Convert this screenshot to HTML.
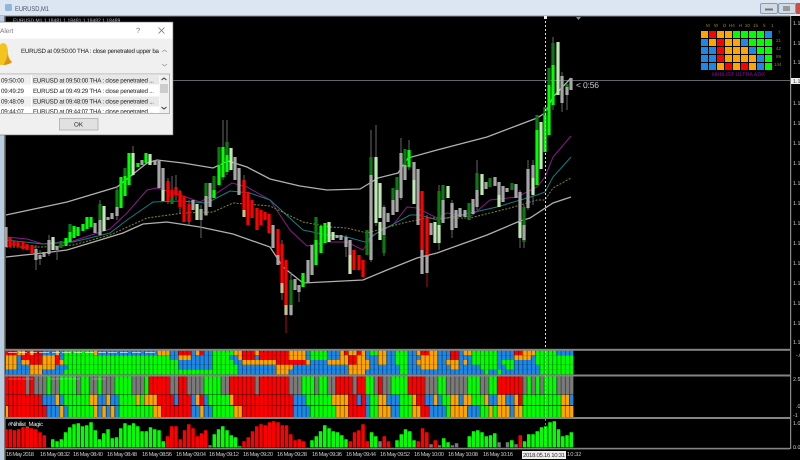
<!DOCTYPE html>
<html><head><meta charset="utf-8"><style>
html,body{margin:0;padding:0;background:#000;width:800px;height:460px;overflow:hidden}
svg{display:block;font-family:"Liberation Sans",sans-serif;text-rendering:geometricPrecision}
#root{filter:blur(.35px)}
.r{stroke:#f00}.o{stroke:#ffa500}.b{stroke:#1e88e8}.g{stroke:#0f0}.y{stroke:#7a7a7a}
.m rect{width:7px;height:7px}
path{fill:none}
</style></head><body>
<svg id="root" width="800" height="460" viewBox="0 0 800 460" xmlns="http://www.w3.org/2000/svg">
<defs><pattern id="vg" x="3.9" y="0" width="4.25" height="10" patternUnits="userSpaceOnUse"><rect width="1" height="10" fill="#000" opacity=".42"/></pattern></defs>
<rect width="800" height="460" fill="#000"/>
<!-- window chrome -->
<rect width="800" height="16" fill="#dbe6f2"/>
<rect y="15.5" width="790" height="1" fill="#8a8f96"/>
<rect x="0" y="16" width="4" height="444" fill="#b9cde2"/>
<rect x="4" y="16" width="1.6" height="444" fill="#7d7d7d"/>
<rect x="5" y="4" width="7" height="7" rx="1.5" fill="#8fb6dc"/>
<text x="15" y="11" font-size="7" fill="#44556a" textLength="34" lengthAdjust="spacingAndGlyphs">EURUSD,M1</text>
<rect x="760.5" y="3.5" width="17" height="10" rx="1.5" fill="#d0dbe6" stroke="#8a9bb0"/><rect x="765" y="8.5" width="8" height="2" fill="#777"/>
<rect x="778.5" y="3.5" width="17" height="10" rx="1.5" fill="#d0dbe6" stroke="#8a9bb0"/><rect x="783" y="6" width="7" height="5" fill="#999"/>
<rect x="796" y="3" width="4" height="11" fill="#c8504a"/>
<text x="13" y="22" font-size="5" fill="#bbb">EURUSD,M1  1.18481 1.18481 1.18482 1.18489</text>
<!-- axis -->
<rect x="790" y="16" width="1.2" height="433" fill="#8a8a8a"/>
<g font-size="5.4" fill="#d0d0d0"><text x="793" y="25">1.1</text><text x="793" y="45">1.1</text><text x="793" y="64">1.1</text><text x="793" y="105">1.1</text><text x="793" y="125">1.1</text><text x="793" y="145">1.1</text><text x="793" y="165">1.1</text><text x="793" y="185">1.1</text><text x="793" y="205">1.1</text><text x="793" y="225">1.1</text><text x="793" y="245">1.1</text><text x="793" y="265">1.1</text><text x="793" y="285">1.1</text><text x="793" y="305">1.1</text><text x="793" y="325">1.1</text><text x="793" y="344">1.1</text>
<text x="796" y="357">-.0</text><text x="793" y="381">2.5</text><text x="796" y="408">.0</text><text x="793" y="417">-1</text><text x="793" y="425">1.0</text><text x="793" y="449">0.0</text></g>
<rect x="791" y="78" width="9" height="6" fill="#eee"/><text x="793" y="83" font-size="5.4" fill="#333">1.1</text>
<!-- bid line -->
<rect x="173" y="80" width="617" height="1" fill="#5e666e"/>
<!-- indicator lines -->
<path d="M6 215L67 202L117 187L147 163L157 160L183 163L213 168L228 161L247 167L270 179L300 186L327 190L360 189L370 183L378 178L398 173L408 158L437 150L487 137L537 118L545 113L553 97L571 78" stroke="#b0b0b0" stroke-width="1.3"/>
<path d="M6 257L43 253L67 250L100 240L123 233L143 224L167 222L200 227L233 234L270 247L283 267L303 283L363 280L387 270L417 258L437 253L487 235L520 221L530 218L553 203L571 197" stroke="#b0b0b0" stroke-width="1.3"/>
<path d="M6 237L27 239L43 244L73 241L110 229L127 213L147 190L157 188L180 195L200 202L217 193L232 183L247 187L270 200L290 230L307 246L327 242L347 242L363 250L373 235L393 225L407 207L417 208L437 218L447 213L470 217L490 200L517 197L537 187L545 177L553 157L571 136" stroke="#8c1a8c" stroke-width="1"/>
<path d="M6 240L43 244L73 242L110 233L127 220L153 202L180 201L207 203L230 191L250 193L270 200L303 230L327 235L347 237L365 242L377 233L410 215L420 215L437 220L470 213L497 207L537 195L545 192L553 177L571 157" stroke="#0e7f86" stroke-width="1"/>
<path d="M6 247L43 247L73 245L110 235L147 218L183 213L213 212L233 203L270 206L303 222L330 227L347 228L367 233L403 223L427 218L470 218L510 208L537 200L545 200L553 188L571 178" stroke="#8a8a10" stroke-width="1" stroke-dasharray="2 1.5"/>
<!-- wicks -->
<path stroke="#666" stroke-width="1" d="M36 245V270M40 250V265M49 235V256M57 246V260M100 200V236M117 187V220M133 146V176M168 178V204M172 176V204M176 175V200M180 190V213M189 200V225M201 205V238M223 120V180M227 120V175M244 175V205M282 240V300M291 272V316M299 285V302M346 235V257M371 130V262M376 125V226M384 205V256M401 138V200M409 140V170M427 215V287M439 185V250M452 200V238M477 160V210M520 190V248M524 205V248M528 160V210M533 160V205M553 37V110M562 72V112M567 84V110"/>
<path stroke="#b01010" stroke-width="1" d="M286 300V333M427 270V287"/>
<!-- bodies: dark green -->
<path stroke="#0b7a12" stroke-width="3.2" d="M61 241V248M70 224V232M100 204V220M117 190V207M125 168V176M206 183V216M214 176V198M219 147V165M227 142V155M291 280V313M316 217V240M367 230V255M371 157V175M384 235V253M393 188V200M397 177V190M405 149V165M439 191V225M443 185V200M469 203V220M477 173V190M490 178V187M512 183V190M524 207V242M537 115V130M545 107V115M549 68V85M553 43V65M567 84V87M172 197V204"/>
<!-- bright green -->
<path stroke="#0f0" stroke-width="3.2" d="M66 238V246M70 232V242M74 226V238M78 227V236M83 224V231M87 217V229M91 217V227M121 177V208M125 176V196M129 153V185M138 163V167M146 153V163M214 190V198M219 165V185M223 147V177M227 155V172M303 273V287M316 240V265M321 226V253M325 223V243M409 150V167M537 130V185M545 115V152M549 85V135M553 65V105"/>
<!-- light -->
<path stroke="#bfe8b4" stroke-width="3.2" d="M53 237V250M104 206V231M133 153V175M150 154V165M163 190V201M197 204V220M231 148V170M329 222V242M333 232V240M380 183V218M414 180V204M435 222V243M448 186V198M482 174V195M439 225V243M499 195V207M520 222V238M533 178V195M541 122V169M558 42V95M376 157V223M350 255V274M380 222V240"/>
<!-- grey -->
<path stroke="#a6a6a6" stroke-width="3.2" d="M6 227V247M36 249V260M40 255V259M44 252V257M49 240V254M57 246V250M95 223V233M100 220V235M108 217V220M112 213V219M117 207V216M142 160V165M155 160V165M159 161V188M163 168V190M193 200V210M201 209V220M206 196V215M210 183V207M235 157V180M239 168V195M273 225V248M278 255V265M291 305V315M295 279V290M299 285V292M308 260V283M312 245V275M341 235V240M337 235V238M346 237V247M350 240V255M371 175V260M384 207V235M388 213V222M393 200V215M397 190V212M401 153V198M405 165V180M414 162V180M418 169V225M431 223V235M443 200V223M452 203V230M456 210V228M460 208V217M465 210V217M473 199V214M477 190V207M486 182V189M495 177V186M499 182V195M503 186V202M507 188V192M516 184V198M520 192V222M524 225V240M528 169V208M533 165V178M562 76V103M567 87V95M571 78V90M422 250V274M427 255V273"/>
<!-- red -->
<path stroke="#f00" stroke-width="3.2" d="M10 237V247M14 241V246M18 241V247M23 242V249M27 244V250M32 245V253M168 181V201M172 190V197M176 187V195M180 191V207M184 196V222M189 204V222M244 180V210M248 192V225M252 200V218M257 208V230M261 210V225M265 212V220M269 214V233M278 229V255M282 244V283M286 260V305M354 250V270M359 255V270M363 260V277M422 191V250M427 218V255"/>
<path stroke="#c8c090" stroke-width="3.2" d="M244 210V217M282 283V293M286 305V315"/>
<!-- cursor -->
<path d="M545.5 17V349" stroke="#ddd" stroke-width="1" stroke-dasharray="2 2"/>
<rect x="544" y="16" width="3" height="3" fill="#eee"/><path d="M576 17h5l-2.500 3z" style="fill:#7d8a98"/>
<text x="576" y="88" font-size="8.500" fill="#cfcfcf" textLength="23">&lt; 0:56</text>
<!-- MTF matrix -->
<g font-size="4.500" fill="#8a8420"><text x="706" y="27">M</text><text x="714" y="27">W</text><text x="723" y="27">D</text><text x="729" y="27">H4</text><text x="739" y="27">H</text><text x="745" y="27">30</text><text x="753" y="27">15</text><text x="763" y="27">5</text><text x="771" y="27">1</text><text x="778" y="34">7</text><text x="776" y="42">21</text><text x="776" y="50">42</text><text x="776" y="58">89</text><text x="774" y="66">144</text></g>
<g class="m" fill="#ffa500"><rect x="701" y="31"/><rect x="717" y="31"/><rect x="725" y="31"/><rect x="709" y="39"/><rect x="725" y="39"/><rect x="733" y="39"/><rect x="725" y="47"/><rect x="733" y="47"/><rect x="741" y="47"/><rect x="725" y="55"/><rect x="733" y="55"/><rect x="741" y="55"/><rect x="749" y="55"/><rect x="717" y="63"/><rect x="733" y="63"/><rect x="749" y="63"/></g>
<g class="m" fill="#f00"><rect x="709" y="31"/><rect x="717" y="39"/><rect x="717" y="47"/><rect x="717" y="55"/><rect x="725" y="63"/><rect x="741" y="63"/></g>
<g class="m" fill="#0f0"><rect x="733" y="31"/><rect x="741" y="31"/><rect x="749" y="31"/><rect x="757" y="31"/><rect x="749" y="39"/><rect x="757" y="39"/><rect x="765" y="39"/><rect x="757" y="47"/><rect x="765" y="47"/><rect x="765" y="55"/><rect x="765" y="63"/></g>
<g class="m" fill="#1e88e8"><rect x="765" y="31"/><rect x="701" y="39"/><rect x="741" y="39"/><rect x="701" y="47"/><rect x="709" y="47"/><rect x="749" y="47"/><rect x="701" y="55"/><rect x="709" y="55"/><rect x="757" y="55"/><rect x="701" y="63"/><rect x="709" y="63"/><rect x="757" y="63"/></g>
<text x="712" y="76" font-size="5.500" fill="#8d0a9e" textLength="53">NIHILIST ULTRA ADX</text>
<!-- heat 1 -->
<svg x="6" y="0" width="784" height="460" viewBox="6 0 784 460">
<g stroke-width="4.800">
<g transform="translate(3.900,352.800) scale(4.250,1)">
<path class="r" d="M0 0H3M5 0H6M7 0H9M41 0H44M46 0H47M56 0H59M60 0H67M80 0H81M83 0H84M98 0H100M105 0H107M120 0H122"/>
<path class="o" d="M3 0H5M6 0H7M12 0H13M21 0H22M36 0H39M45 0H46M54 0H56M59 0H60M67 0H71M79 0H80M81 0H83M84 0H85M88 0H90M97 0H98M100 0H102M108 0H110M122 0H125"/>
<path class="b" d="M9 0H12M13 0H14M22 0H36M39 0H41M44 0H45M47 0H49M71 0H72M76 0H79M85 0H86M90 0H92M95 0H97M102 0H105M107 0H108M116 0H120M130 0H134"/>
<path class="g" d="M14 0H21M49 0H54M72 0H76M86 0H88M92 0H95M110 0H116M125 0H130"/>
</g>
<g transform="translate(3.900,357.600) scale(4.250,1)">
<path class="r" d="M4 0H9M12 0H13M56 0H59M60 0H67M81 0H83M105 0H107"/>
<path class="o" d="M0 0H3M9 0H12M41 0H44M55 0H56M67 0H71M79 0H81M83 0H85M88 0H90M98 0H102M120 0H124"/>
<path class="b" d="M3 0H4M13 0H14M39 0H41M44 0H49M53 0H55M59 0H60M71 0H72M76 0H79M85 0H88M90 0H92M95 0H98M102 0H105M107 0H110M116 0H120M124 0H125"/>
<path class="g" d="M14 0H39M49 0H53M72 0H76M92 0H95M110 0H116M125 0H134"/>
</g>
<g transform="translate(3.900,362.400) scale(4.250,1)">
<path class="r" d="M6 0H9M12 0H13M64 0H71M81 0H83"/>
<path class="o" d="M0 0H3M4 0H6M9 0H12M13 0H14M56 0H64M71 0H72M76 0H81M83 0H86M88 0H90M97 0H102M104 0H107M108 0H109"/>
<path class="b" d="M3 0H4M41 0H49M54 0H56M72 0H76M86 0H88M90 0H92M95 0H97M102 0H104M107 0H108M109 0H110M116 0H117M120 0H125"/>
<path class="g" d="M14 0H41M49 0H54M92 0H95M110 0H116M117 0H120M125 0H134"/>
</g>
<g transform="translate(3.900,367.200) scale(4.250,1)">
<path class="o" d="M0 0H3M6 0H12M64 0H68M81 0H86M98 0H102M105 0H107"/>
<path class="b" d="M3 0H6M12 0H15M41 0H49M55 0H64M68 0H81M86 0H93M95 0H98M102 0H105M107 0H112M116 0H118M120 0H126"/>
<path class="g" d="M15 0H41M49 0H55M93 0H95M112 0H116M118 0H120M126 0H134"/>
</g>
<g transform="translate(3.900,372) scale(4.250,1)">
<path class="o" d="M6 0H9M64 0H67M81 0H85"/>
<path class="b" d="M0 0H6M9 0H14M55 0H64M67 0H81M85 0H93M95 0H113M114 0H116M117 0H126"/>
<path class="g" d="M14 0H55M93 0H95M113 0H114M116 0H117M126 0H134"/>
</g>
</g>
<!-- heat 2 -->
<g transform="translate(3.900,385.400) scale(4.250,1)" stroke-width="18">
<path class="r" d="M0 0H5M6 0H7M34 0H39M41 0H43M53 0H59M60 0H67M78 0H82M83 0H85M88 0H89M95 0H99M117 0H120M120 0H122"/>
<path class="y" d="M5 0H6M7 0H10M11 0H13M17 0H18M20 0H22M23 0H26M30 0H33M39 0H41M43 0H47M51 0H53M59 0H60M67 0H70M73 0H74M76 0H78M82 0H83M87 0H88M89 0H91M99 0H102M104 0H109M112 0H114M122 0H123M124 0H125M126 0H127M130 0H134"/>
<path class="g" d="M10 0H11M13 0H17M18 0H20M22 0H23M26 0H30M33 0H34M47 0H51M70 0H73M74 0H76M85 0H87M91 0H95M102 0H104M109 0H112M114 0H116M123 0H124M125 0H126M127 0H130"/>
<path class="r" d="M116 0H117"/>
</g>
<g transform="translate(3.900,400) scale(4.250,1)" stroke-width="10.600">
<path class="r" d="M0 0H9M36 0H40M41 0H44M46 0H47M54 0H68M81 0H83M84 0H85M97 0H99M121 0H122"/>
<path class="o" d="M12 0H13M20 0H22M24 0H25M31 0H32M33 0H36M45 0H46M53 0H54M77 0H81M88 0H90M96 0H97M101 0H102M105 0H107M108 0H110M113 0H114M116 0H118M120 0H121M131 0H133"/>
<path class="b" d="M9 0H12M13 0H14M22 0H24M25 0H27M40 0H41M44 0H45M47 0H48M68 0H71M83 0H84M85 0H86M90 0H93M99 0H101M102 0H103M107 0H108M114 0H116M118 0H120M133 0H134"/>
<path class="g" d="M14 0H20M27 0H31M32 0H33M48 0H53M71 0H77M86 0H88M93 0H96M103 0H105M110 0H113M122 0H131"/>
</g>
<g transform="translate(3.900,411.500) scale(4.250,1)" stroke-width="11">
<path class="r" d="M1 0H10M37 0H44M56 0H68M81 0H85M98 0H100"/>
<path class="o" d="M0 0H1M13 0H14M21 0H22M23 0H24M25 0H26M35 0H37M46 0H47M54 0H56M78 0H81M88 0H91M96 0H98M105 0H109M114 0H115M116 0H119M120 0H122M131 0H134"/>
<path class="b" d="M10 0H13M14 0H15M22 0H23M24 0H25M26 0H27M44 0H46M47 0H49M68 0H72M85 0H86M91 0H93M100 0H104M109 0H112M119 0H120"/>
<path class="g" d="M15 0H21M27 0H35M49 0H54M72 0H78M86 0H88M93 0H96M104 0H105M112 0H114M115 0H116M122 0H131"/>
</g>
<rect x="0" y="350" width="800" height="67.500" fill="url(#vg)"/>
<!-- hist -->
<g transform="translate(3.900,447.300) scale(4.250,1)" stroke-width=".82">
<path class="r" d="M.5 0v-18M1.500 0v-18M2.500 0v-17M3.500 0v-18M4.500 0v-20M5.500 0v-20M6.500 0v-19M7.500 0v-18M8.500 0v-15M9.500 0v-12M38.500 0v-11M39.500 0v-21M40.500 0v-21M41.500 0v-8M42.500 0v-17M43.500 0v-23M44.500 0v-19M45.500 0v-11M46.500 0v-14M47.500 0v-17M56.500 0v-6M57.500 0v-10M58.500 0v-16M59.500 0v-21M60.500 0v-23M61.500 0v-22M62.500 0v-25M63.500 0v-26M64.500 0v-25M65.500 0v-22M66.500 0v-22M67.500 0v-13M68.500 0v-7M69.500 0v-8M70.500 0v-6M81.500 0v-6M82.500 0v-15M83.500 0v-17M84.500 0v-23M85.500 0v-6M89.500 0v-11M90.500 0v-6M97.500 0v-6M98.500 0v-19M99.500 0v-15M101.500 0v-7M121.500 0v-12"/>
<path class="g" d="M11.500 0v-8M12.500 0v-6M13.500 0v-8M14.500 0v-15M15.500 0v-20M16.500 0v-23M17.500 0v-24M18.500 0v-21M19.500 0v-22M20.500 0v-25M21.500 0v-17M22.500 0v-8M23.500 0v-14M24.500 0v-18M25.500 0v-9M26.500 0v-10M27.500 0v-19M28.500 0v-24M29.500 0v-22M30.500 0v-24M31.500 0v-21M32.500 0v-16M33.500 0v-16M34.500 0v-20M35.500 0v-18M36.500 0v-17M37.500 0v-6M49.500 0v-13M50.500 0v-18M51.500 0v-21M52.500 0v-17M53.500 0v-12M54.500 0v-10M55.500 0v-1M72.500 0v-7M73.500 0v-11M74.500 0v-16M75.500 0v-22M76.500 0v-19M77.500 0v-16M78.500 0v-15M79.500 0v-12M80.500 0v-8M86.500 0v-15M87.500 0v-11M92.500 0v-7M93.500 0v-13M94.500 0v-18M95.500 0v-16M96.500 0v-7M103.500 0v-9M104.500 0v-5M109.500 0v-11M110.500 0v-16M111.500 0v-17M112.500 0v-15M113.500 0v-11M114.500 0v-12M115.500 0v-14M119.500 0v-7M122.500 0v-6M123.500 0v-13M124.500 0v-13M125.500 0v-16M126.500 0v-20M127.500 0v-21M128.500 0v-25M129.500 0v-26M130.500 0v-18M131.500 0v-11M132.500 0v-12M133.500 0v-15"/>
<path class="y" d="M48.500 0v-2M88.500 0v-6M100.500 0v-3M102.500 0v-2M105.500 0v-2M106.500 0v-4M116.500 0v-5M118.500 0v-5M120.500 0v-3"/>
</g>
</svg>
<!-- panel separators -->
<g fill="#858585"><rect x="5" y="348.800" width="785" height="2"/><rect x="5" y="374.500" width="785" height="2"/><rect x="5" y="417" width="785" height="2"/><rect x="5" y="447.800" width="785" height="1.600"/></g>
<path d="M545.5 351V447" stroke="#ddd" stroke-width=".8" stroke-dasharray="2 2" opacity=".7"/>
<!-- tiny labels over heat -->
<path d="M8 352.500h9M19 352.500h8M30 352.500h7M39 352.500h10M52 352.500h8M62 352.500h9M74 352.500h8M85 352.500h9M98 352.500h8M108 352.500h9M120 352.500h8M132 352.500h9M145 352.500h10" stroke="#fff" stroke-width="1.100" opacity=".6"/>
<path d="M8 379h25M50 379h30M92 379h14" stroke="#ddd" stroke-width="1" opacity=".35"/>
<text x="8" y="426" font-size="6" fill="#e6e6e6" textLength="35">#Nihilist_Magic</text>
<!-- time axis -->
<g font-size="5.800" fill="#c8c8c8"><text x="6" y="456" textLength="28">16 May 2018</text><text x="40" y="456" textLength="30">16 May 08:32</text><text x="73" y="456" textLength="30">16 May 08:40</text><text x="107" y="456" textLength="30">16 May 08:48</text><text x="142" y="456" textLength="30">16 May 08:56</text><text x="176" y="456" textLength="30">16 May 09:04</text><text x="209" y="456" textLength="30">16 May 09:12</text><text x="243" y="456" textLength="30">16 May 09:20</text><text x="277" y="456" textLength="30">16 May 09:28</text><text x="312" y="456" textLength="30">16 May 09:36</text><text x="346" y="456" textLength="30">16 May 09:44</text><text x="380" y="456" textLength="30">16 May 09:52</text><text x="414" y="456" textLength="30">16 May 10:00</text><text x="448" y="456" textLength="30">16 May 10:08</text><text x="483" y="456" textLength="30">16 May 10:16</text><text x="567" y="456">10:32</text></g>
<rect x="522" y="451" width="44" height="8" fill="#eee"/><text x="523" y="457" font-size="6" fill="#333" textLength="42">2018.05.16 10:31</text>
<!-- dialog -->
<rect x="-2" y="22" width="175" height="113" fill="#f0f0f0" stroke="#707070" stroke-width=".6"/>
<rect x="0" y="22.500" width="172.500" height="16" fill="#fff"/>
<text x="0" y="33" font-size="6.500" fill="#777">Alert</text>
<text x="136" y="33" font-size="7.500" fill="#777">?</text>
<path d="M158.500 27.500l6 6M164.500 27.500l-6 6" stroke="#777" stroke-width=".8"/>
<path d="M4 43C7 44 8 48 8 53C8 58 10 60 12 62C8 64 3 65 -1 65L-1 46C0 44 2 43 4 43Z" style="fill:#f3c41e"/>
<path d="M8 53C8 58 10 60 12 62C10 64 6 65 3 65C6 62 7 57 8 53Z" style="fill:#e0920e"/>
<text x="21" y="53" font-size="6.200" fill="#222" textLength="138">EURUSD at 09:50:00 THA : close penetrated upper ba</text>
<path d="M162 52l2.500-2 2.500 2M162 64l2.500 2 2.500-2" stroke="#999" stroke-width=".8"/>
<rect x="-1" y="74" width="170.500" height="39.500" fill="#fff" stroke="#a5a5a5" stroke-width=".8"/>
<rect x="0" y="75" width="31" height="9.500" fill="#f0f0f0"/><rect x="32" y="75" width="127" height="9.500" fill="#e8e8e8"/>
<rect x="0" y="96.500" width="31" height="10" fill="#f0f0f0"/><rect x="32" y="96.500" width="127" height="10" fill="#e8e8e8"/>
<g font-size="6.200" fill="#222"><text x="1" y="82.500" textLength="23">09:50:00</text><text x="33" y="82.500" textLength="121">EURUSD at 09:50:00 THA : close penetrated ...</text>
<text x="1" y="93" textLength="23">09:49:29</text><text x="33" y="93" textLength="121">EURUSD at 09:49:29 THA : close penetrated ...</text>
<text x="1" y="103.500" textLength="23">09:48:09</text><text x="33" y="103.500" textLength="121">EURUSD at 09:48:09 THA : close penetrated ...</text>
<svg x="0" y="107" width="160" height="6" viewBox="0 107 160 6"><text x="1" y="113.500" textLength="23">09:44:07</text><text x="33" y="113.500" textLength="121">EURUSD at 09:44:07 THA : close penetrated ...</text></svg></g>
<rect x="159.500" y="74.500" width="9.500" height="38.500" fill="#f0f0f0"/>
<rect x="160" y="84" width="8" height="9" fill="#cdcdcd"/>
<path d="M161.500 80l2.500-2 2.500 2M161.500 107l2.500 2 2.500-2" stroke="#333" stroke-width=".9"/>
<rect x="59.500" y="118.500" width="38.500" height="11.500" fill="#e1e1e1" stroke="#adadad" stroke-width=".8"/>
<text x="74" y="126.500" font-size="6.200" fill="#222">OK</text>
</svg>
</body></html>
